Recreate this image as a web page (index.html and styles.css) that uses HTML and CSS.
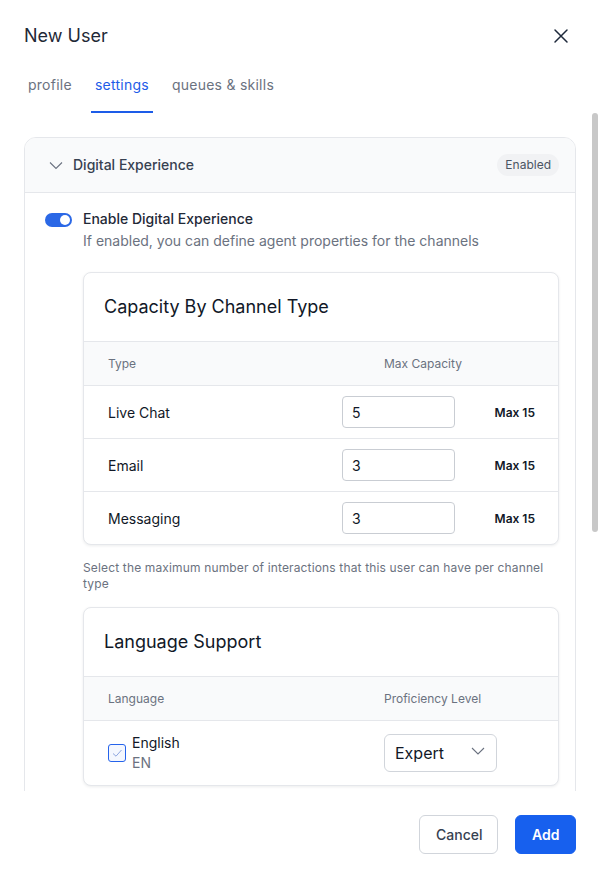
FILE: index.html
```html
<!DOCTYPE html>
<html lang="en">
<head>
<meta charset="utf-8">
<title>New User</title>
<link rel="stylesheet" href="styles.css">
</head>
<body>
<div class="modal">
  <header class="modal-header">
    <h1 class="modal-title">New User</h1>
    <button class="close-btn" aria-label="Close">
      <svg width="24" height="24" viewBox="0 0 24 24"><path d="M6 6L18 18M18 6L6 18" stroke="#1e293b" stroke-width="1.5" fill="none" stroke-linecap="round"/></svg>
    </button>
  </header>
  <nav class="tabs">
    <span class="tab">profile</span>
    <span class="tab active">settings</span>
    <span class="tab">queues &amp; skills</span>
  </nav>
  <div class="scroll-wrap">
    <main class="scroll">
      <section class="acc">
        <div class="acc-head">
          <svg class="acc-chev" width="16" height="16" viewBox="0 0 16 16"><path d="M2 5.5L8 11.5L14 5.5" stroke="#6b7280" stroke-width="1.1" fill="none"/></svg>
          <span class="acc-title">Digital Experience</span>
          <span class="badge">Enabled</span>
        </div>
        <div class="acc-body">
          <div class="toggle-row">
            <span class="toggle"><span class="knob"></span></span>
            <div>
              <div class="toggle-label">Enable Digital Experience</div>
              <div class="toggle-desc">If enabled, you can define agent properties for the channels</div>
            </div>
          </div>
          <div class="inner">
            <div class="card">
              <h2 class="card-title">Capacity By Channel Type</h2>
              <div class="thead cap-grid">
                <span>Type</span>
                <span>Max Capacity</span>
              </div>
              <div class="trow">
                <span class="cell-label">Live Chat</span>
                <input class="num" type="text" value="5">
                <span class="max">Max 15</span>
              </div>
              <div class="trow">
                <span class="cell-label">Email</span>
                <input class="num" type="text" value="3">
                <span class="max">Max 15</span>
              </div>
              <div class="trow">
                <span class="cell-label">Messaging</span>
                <input class="num" type="text" value="3">
                <span class="max">Max 15</span>
              </div>
            </div>
            <p class="help">Select the maximum number of interactions that this user can have per channel type</p>
            <div class="card">
              <h2 class="card-title">Language Support</h2>
              <div class="thead cap-grid">
                <span>Language</span>
                <span>Proficiency Level</span>
              </div>
              <div class="lrow">
                <div class="lang">
                  <span class="check">
                    <svg width="16" height="16" viewBox="0 0 16 16"><path d="M4 8.5L7 11.2L12.5 5" stroke="#8ea6e0" stroke-width="1" fill="none"/></svg>
                  </span>
                  <div>
                    <div class="lang-name">English</div>
                    <div class="lang-code">EN</div>
                  </div>
                </div>
                <div class="select">
                  <span>Expert</span>
                  <svg width="14" height="8" viewBox="0 0 14 8"><path d="M1 1L7 7L13 1" stroke="#6b7280" stroke-width="1.1" fill="none"/></svg>
                </div>
              </div>
            </div>
          </div>
        </div>
      </section>
    </main>
    <div class="scroll-thumb"></div>
  </div>
  <footer class="modal-footer">
    <button class="btn btn-secondary">Cancel</button>
    <button class="btn btn-primary">Add</button>
  </footer>
</div>
</body>
</html>
```

FILE: styles.css
```css
* { box-sizing: border-box; }
html, body { margin: 0; padding: 0; height: 100%; }
body {
  font-family: Inter, "Noto Sans", "Liberation Sans", sans-serif;
  color: #111827;
  background: #fff;
}
.modal {
  height: 874px;
  display: flex;
  flex-direction: column;
}
.modal-header {
  display: flex;
  align-items: center;
  justify-content: space-between;
  padding: 24px 26px 0 24px;
}
.modal-title {
  margin: 0;
  font-size: 18px;
  line-height: 22px;
  font-weight: 400;
  color: #1f2937;
}
.close-btn {
  border: 0;
  background: none;
  padding: 0;
  width: 24px;
  height: 24px;
  display: flex;
}
.tabs {
  display: flex;
  gap: 15px;
  padding: 0 24px;
  margin-top: 27px;
}
.tab {
  padding: 0 4px 16px;
  font-size: 14px;
  line-height: 20px;
  letter-spacing: 0.25px;
  color: #6b7280;
  border-bottom: 2px solid transparent;
}
.tab.active {
  color: #1d5ce8;
  border-bottom-color: #1d5ce8;
}
.scroll-wrap {
  flex: 1;
  min-height: 0;
  position: relative;
}
.scroll {
  height: 100%;
  overflow-y: auto;
  scrollbar-width: none;
  padding: 24px 23px 300px 24px;
}
.scroll::-webkit-scrollbar { display: none; }
.scroll-thumb {
  position: absolute;
  top: 0;
  right: 1px;
  width: 6px;
  height: 419px;
  border-radius: 3px;
  background: #c8c8c8;
}
.acc {
  border: 1px solid #e5e7eb;
  border-radius: 12px;
  overflow: hidden;
  background: #fff;
}
.acc-head {
  display: flex;
  align-items: center;
  padding: 16px 16px 16px 23px;
  background: #f9fafb;
  border-bottom: 1px solid #e5e7eb;
  height: 55px;
}
.acc-chev { flex: none; }
.acc-title {
  margin-left: 9px;
  font-size: 14px;
  line-height: 22px;
  font-weight: 500;
  color: #374151;
  flex: 1;
}
.badge {
  background: #f1f2f4;
  color: #4b5563;
  font-size: 12px;
  line-height: 22px;
  padding: 0 8px;
  border-radius: 11px;
}
.acc-body {
  padding: 16px 16px 20px 20px;
}
.toggle-row {
  display: flex;
  gap: 11px;
  align-items: flex-start;
}
.toggle {
  flex: none;
  width: 27px;
  height: 14px;
  margin-top: 4px;
  border-radius: 7px;
  background: #2b68e6;
  position: relative;
}
.knob {
  position: absolute;
  right: 2px;
  top: 2px;
  width: 10px;
  height: 10px;
  border-radius: 50%;
  background: #fff;
}
.toggle-label {
  font-size: 14px;
  line-height: 20px;
  font-weight: 500;
  color: #1f2937;
}
.toggle-desc {
  margin-top: 2px;
  font-size: 14px;
  line-height: 20px;
  color: #6b7280;
}
.inner {
  padding-left: 38px;
  margin-top: 21px;
}
.card {
  border: 1px solid #e5e7eb;
  border-radius: 8px;
  background: #fff;
  box-shadow: 0 1px 3px rgba(17, 24, 39, 0.08);
  overflow: hidden;
}
.card-title {
  margin: 0;
  padding: 20px 20px;
  font-size: 18px;
  line-height: 28px;
  font-weight: 400;
  color: #111827;
}
.thead {
  background: #f9fafb;
  border-top: 1px solid #e5e7eb;
  border-bottom: 1px solid #e5e7eb;
  height: 45px;
  padding: 0 24px;
  font-size: 12px;
  color: #6b7280;
  align-items: center;
}
.cap-grid {
  display: grid;
  grid-template-columns: 1fr 150px;
}
.trow {
  display: grid;
  grid-template-columns: 1fr 113px 80px;
  align-items: center;
  padding: 10px 23px 10px 24px;
  border-bottom: 1px solid #e5e7eb;
}
.trow:last-child { border-bottom: 0; }
.cell-label {
  font-size: 14px;
  color: #111827;
}
.num {
  width: 113px;
  height: 32px;
  border: 1px solid #c9cdd3;
  border-radius: 4px;
  padding: 0 9px;
  font: inherit;
  font-size: 14px;
  color: #111827;
  outline: none;
}
.max {
  text-align: right;
  font-size: 12px;
  font-weight: 600;
  color: #111827;
}
.help {
  margin: 15px 0 15px;
  font-size: 12px;
  line-height: 16px;
  letter-spacing: 0.15px;
  color: #6b7280;
}
.lrow {
  display: grid;
  grid-template-columns: 1fr 150px;
  align-items: center;
  padding: 12px 24px;
}
.lang {
  display: flex;
  align-items: center;
  gap: 6px;
}
.check {
  width: 18px;
  height: 18px;
  border: 1px solid #2563eb;
  border-radius: 3px;
  background: #f4f7fe;
  display: flex;
  align-items: center;
  justify-content: center;
}
.lang-name {
  font-size: 14px;
  line-height: 20px;
  color: #111827;
}
.lang-code {
  font-size: 14px;
  line-height: 20px;
  color: #6b7280;
}
.select {
  width: 113px;
  height: 38px;
  border: 1px solid #d1d5db;
  border-radius: 6px;
  display: flex;
  align-items: center;
  justify-content: space-between;
  padding: 0 11px 0 10px;
  font-size: 16px;
  color: #111827;
}
.select svg { margin-top: -4px; }
.modal-footer {
  display: flex;
  justify-content: flex-end;
  gap: 17px;
  padding: 24px 23px 20px;
}
.btn {
  height: 39px;
  border-radius: 6px;
  font-family: inherit;
  font-size: 14px;
  font-weight: 500;
  padding: 0 16px;
}
.btn-secondary {
  background: #fff;
  border: 1px solid #d1d5db;
  color: #374151;
  width: 79px;
}
.btn-primary {
  background: #1760ee;
  border: 1px solid #1760ee;
  color: #fff;
  font-weight: 600;
  width: 61px;
}
```
